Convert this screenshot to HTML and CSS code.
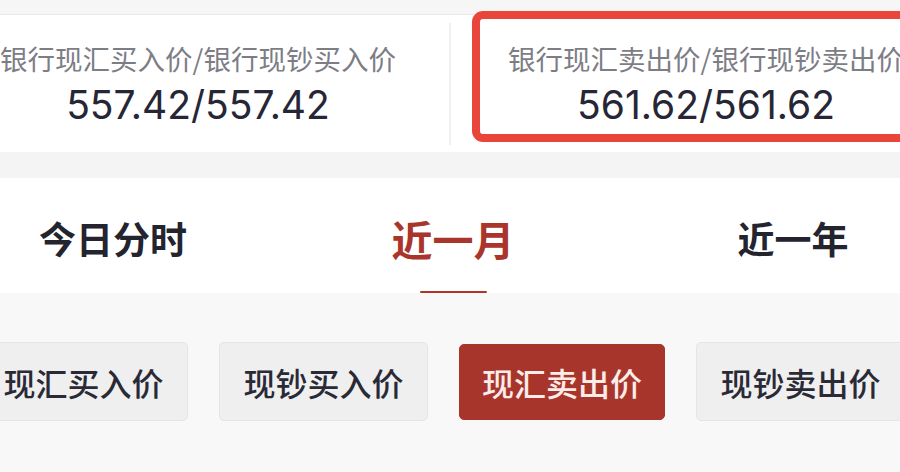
FILE: index.html
```html
<!DOCTYPE html>
<html lang="zh-CN">
<head>
<meta charset="UTF-8">
<meta name="viewport" content="width=device-width, initial-scale=1.0">
<title>汇率行情</title>
<link rel="stylesheet" href="styles.css">
</head>
<body>
    <div class="page">
        <div class="top-strip"></div>

        <div class="quotes">
            <div class="quote">
                <div class="quote-label">银行现汇买入价/银行现钞买入价</div>
                <div class="quote-value">557.42/557.42</div>
            </div>
            <div class="quote-divider"></div>
            <div class="quote">
                <div class="highlight"></div>
                <div class="quote-label">银行现汇卖出价/银行现钞卖出价</div>
                <div class="quote-value">561.62/561.62</div>
            </div>
        </div>

        <div class="gap"></div>

        <div class="tabs">
            <div class="tab">今日分时</div>
            <div class="tab active">近一月<span class="tab-line"></span></div>
            <div class="tab">近一年</div>
        </div>

        <div class="options">
            <button class="opt">现汇买入价</button>
            <button class="opt">现钞买入价</button>
            <button class="opt selected">现汇卖出价</button>
            <button class="opt">现钞卖出价</button>
        </div>
    </div>
</body>
</html>
```

FILE: styles.css
```css
body {
    margin: 0;
    overflow: hidden;
    background-color: #f8f8f9;
    font-family: "Noto Sans CJK SC", "Noto Sans", sans-serif;
}
.page {
    width: 1020px;
    margin-left: -57px;
}
.top-strip {
    height: 14px;
    background-color: #f6f6f7;
    border-bottom: 1px solid #e9e9ea;
}
.quotes {
    display: flex;
    background-color: #fff;
    height: 137px;
}
.quote {
    position: relative;
    width: 510px;
    display: flex;
    flex-direction: column;
    align-items: center;
    padding-top: 25px;
    box-sizing: border-box;
}
.quote-divider {
    width: 2px;
    margin: 8px 0 7px -4px;
    background-color: #f0f0f1;
}
.quote-label {
    font-size: 27.5px;
    line-height: 36px;
    color: #7d7d85;
    white-space: nowrap;
}
.quote-value {
    margin-top: 6px;
    font-family: Inter, "Noto Sans", sans-serif;
    font-size: 39px;
    line-height: 46px;
    font-weight: 400;
    color: #262636;
}
/* red annotation frame around the selling price */
.highlight {
    position: absolute;
    left: 21px;
    right: 16px;
    top: -4px;
    height: 131px;
    border: 8px solid #e9453a;
    border-radius: 11px;
    box-sizing: border-box;
}
.gap {
    height: 26px;
    background-color: #f4f4f5;
}
.tabs {
    display: flex;
    background-color: #fff;
    height: 115px;
}
.tab {
    width: 341px;
    display: flex;
    flex-direction: column;
    align-items: center;
    padding-top: 35px;
    box-sizing: border-box;
    font-size: 37px;
    line-height: 50px;
    font-weight: bold;
    color: #24242f;
}
.tab.active {
    color: #a9352b;
    font-size: 41px;
}
.tab-line {
    display: block;
    width: 67px;
    height: 5px;
    margin-top: 28px;
    border-radius: 2px;
    background-color: #b1342c;
}
.options {
    display: flex;
    gap: 31px;
    padding: 49px 0 0 36px;
}
.opt {
    width: 209px;
    height: 79px;
    flex-shrink: 0;
    border: 1px solid #e5e5e7;
    border-radius: 5px;
    background-color: #efeff0;
    font-family: "Noto Sans CJK SC", sans-serif;
    font-size: 32px;
    font-weight: 500;
    color: #2a2a36;
    padding: 0;
}
.opt.selected {
    background-color: #a8352b;
    border-color: #a8352b;
    color: #fbecea;
    height: 76px;
    margin-top: 2px;
    width: 206px;
}
```
